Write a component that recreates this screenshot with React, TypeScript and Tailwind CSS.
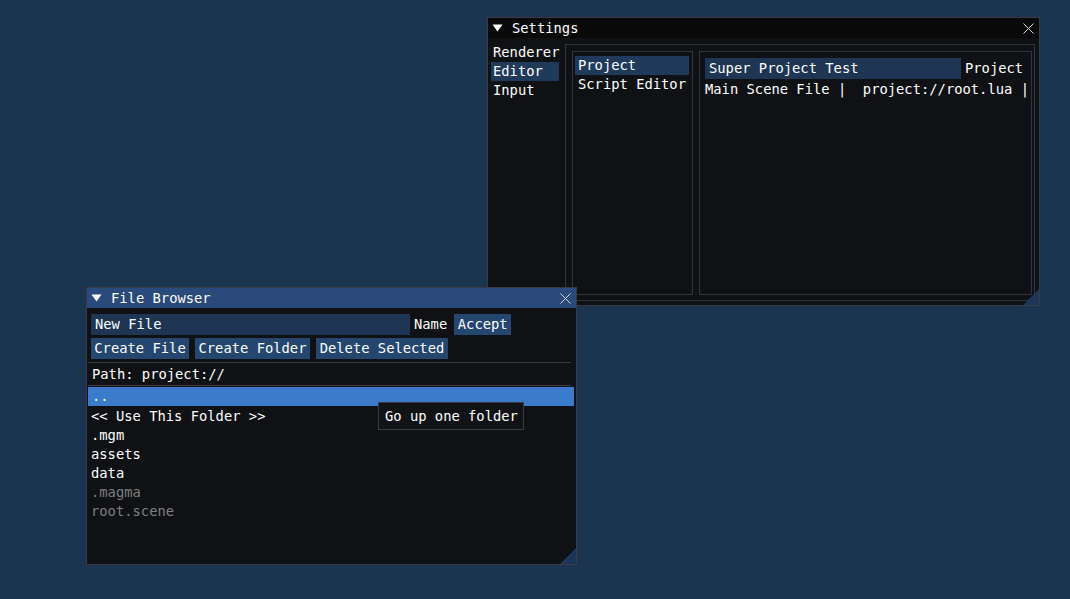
import React from 'react';

const font = "font-['DejaVu_Sans_Mono',monospace] text-[13.8px] leading-[15px]";

function Triangle(): React.ReactElement {
  return (
    <svg width="11" height="8" viewBox="0 0 11 8" className="shrink-0">
      <polygon points="0.5,0.5 10.5,0.5 5.5,7.5" fill="#ffffff" />
    </svg>
  );
}

function CloseIcon(): React.ReactElement {
  return (
    <svg width="11" height="11" viewBox="0 0 11 11" className="shrink-0">
      <path d="M0.5 0.5 L10.5 10.5 M10.5 0.5 L0.5 10.5" stroke="#d4d4d8" strokeWidth="1" />
    </svg>
  );
}

function ResizeGrip(): React.ReactElement {
  return (
    <svg width="16" height="16" viewBox="0 0 16 16" className="absolute right-0 bottom-0">
      <polygon points="16,0 16,16 0,16" fill="#1d3658" />
    </svg>
  );
}

function TitleBar({ title, active }: { title: string; active?: boolean }): React.ReactElement {
  return (
    <div
      className={`h-[20px] shrink-0 flex items-center pl-[4px] pr-[5px] ${
        active ? 'bg-[#294a7a]' : 'bg-[#0a0a0b]'
      }`}
    >
      <Triangle />
      <span className="ml-[9px] text-white">{title}</span>
      <div className="ml-auto">
        <CloseIcon />
      </div>
    </div>
  );
}

function SettingsWindow(): React.ReactElement {
  return (
    <div className="absolute left-[487px] top-[17px] w-[553px] h-[289px] border border-[#393a44] bg-[#0f1114] flex flex-col">
      <TitleBar title="Settings" />
      <div className="flex-1 flex pt-[6px] pb-[4px] pl-[3px] pr-[4px] gap-[6px] min-h-0">
        <div className="w-[68px] -mt-[1px] flex flex-col">
          {['Renderer', 'Editor', 'Input'].map((s) => (
            <div
              key={s}
              className={`h-[19px] flex items-center px-[2px] text-white ${
                s === 'Editor' ? 'bg-[#203a5c]' : ''
              }`}
            >
              {s}
            </div>
          ))}
        </div>
        <div className="flex-1 border border-[#33343d] flex pt-[6px] pb-[5px] pl-[6px] pr-[2px] gap-[6px]">
          <div className="w-[121px] border border-[#33343d] pt-[4px] pl-[2px] pr-[3px]">
            {['Project', 'Script Editor'].map((s) => (
              <div
                key={s}
                className={`h-[19px] flex items-center px-[3px] text-white ${
                  s === 'Project' ? 'bg-[#203a5c]' : ''
                }`}
              >
                {s}
              </div>
            ))}
          </div>
          <div className="flex-1 border border-[#33343d] pt-[6px] pl-[5px] overflow-hidden">
            <div className="flex items-center gap-[4px] whitespace-nowrap">
              <div className="w-[256px] h-[21px] bg-[#1e3554] flex items-center px-[4px] text-white">
                Super Project Test
              </div>
              <span className="text-white">Project</span>
            </div>
            <div className="mt-[3px] h-[15px] whitespace-pre text-white">
              {'Main Scene File |  project://root.lua |'}
            </div>
          </div>
        </div>
      </div>
      <ResizeGrip />
    </div>
  );
}

function FileBrowserWindow(): React.ReactElement {
  const entries: { name: string; dim?: boolean }[] = [
    { name: '<< Use This Folder >>' },
    { name: '.mgm' },
    { name: 'assets' },
    { name: 'data' },
    { name: '.magma', dim: true },
    { name: 'root.scene', dim: true },
  ];

  return (
    <div className="absolute left-[86px] top-[287px] w-[491px] h-[278px] border border-[#393a44] bg-[#0f1114] flex flex-col">
      <TitleBar title="File Browser" active />
      <div className="flex-1 flex flex-col pt-[6px] pl-[1px] pr-[2px]">
        <div className="flex items-center ml-[3px]">
          <div className="w-[319px] h-[21px] bg-[#1e3554] flex items-center px-[4px] text-white">
            New File
          </div>
          <span className="ml-[4px] text-white">Name</span>
          <button className="ml-[7px] w-[57px] h-[21px] bg-[#25466f] text-white">Accept</button>
        </div>
        <div className="flex items-center gap-[6px] ml-[3px] mt-[3px]">
          <button className="w-[98px] h-[21px] bg-[#25466f] text-white">Create File</button>
          <button className="w-[115px] h-[21px] bg-[#25466f] text-white">Create Folder</button>
          <button className="w-[132px] h-[21px] bg-[#25466f] text-white">Delete Selected</button>
        </div>
        <div className="mt-[3px] mr-[3px] h-[1px] bg-[#393a44]" />
        <div className="h-[22px] flex items-center pl-[4px] text-white">Path: project://</div>
        <div className="mr-[3px] h-[1px] bg-[#393a44]" />
        <div className="mt-[1px] h-[19px] bg-[#3b7bcb] flex items-center pl-[4px] text-white">..</div>
        {entries.map((e) => (
          <div
            key={e.name}
            className={`h-[19px] flex items-center pl-[3px] pt-[1px] ${
              e.dim ? 'text-[#7f7f7f]' : 'text-white'
            }`}
          >
            {e.name}
          </div>
        ))}
      </div>
      <ResizeGrip />
    </div>
  );
}

export default function App(): React.ReactElement {
  return (
    <div className={`relative w-[1070px] h-[599px] bg-[#1b3450] overflow-hidden ${font}`}>
      <SettingsWindow />
      <FileBrowserWindow />
      <div className="absolute left-[378px] top-[402px] w-[146px] h-[28px] border border-[#393a44] bg-[#121316] flex items-center pl-[6px] text-white">
        Go up one folder
      </div>
    </div>
  );
}
